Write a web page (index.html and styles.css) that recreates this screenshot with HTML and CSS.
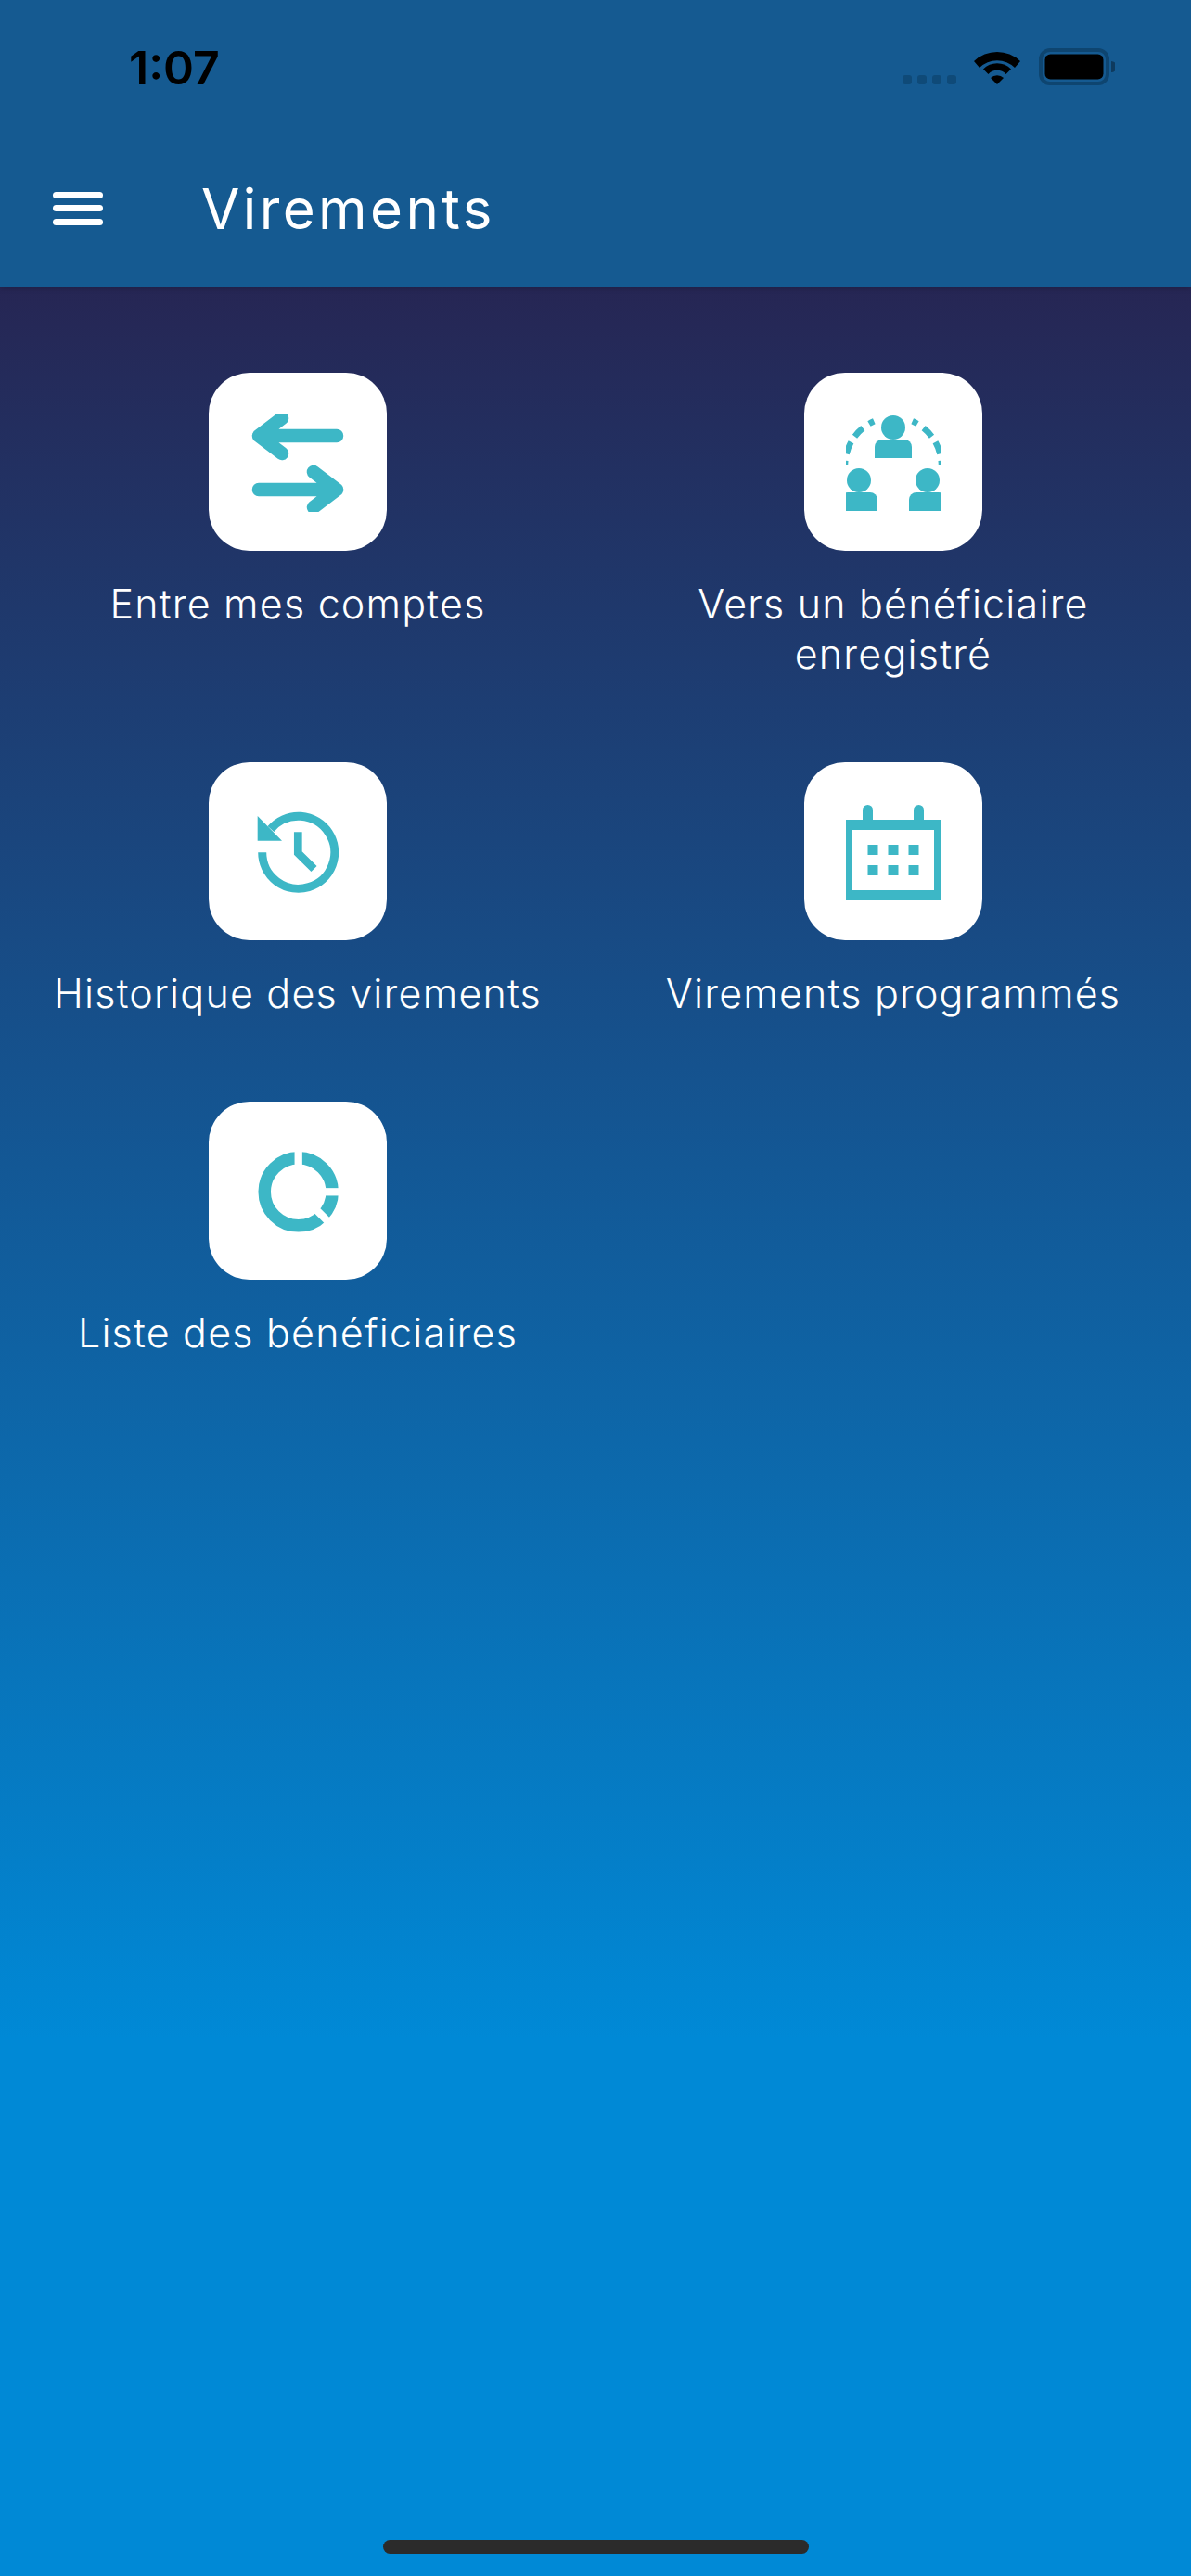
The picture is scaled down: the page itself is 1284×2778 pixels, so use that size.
FILE: index.html
```html
<!DOCTYPE html>
<html lang="fr">
<head>
    <meta charset="UTF-8">
    <meta name="viewport" content="width=device-width, initial-scale=1.0">
    <title>Virements</title>
    <link rel="stylesheet" href="styles.css">
</head>
<body>
    <div id="app">
        <header class="top">
            <div class="status">
                <span class="time">1:07</span>
                <div class="status-icons">
                    <div class="signal"><i></i><i></i><i></i><i></i></div>
                    <svg class="wifi" viewBox="0 0 50 38">
                        <path d="M0 13 A36 36 0 0 1 50 13 L44 20 A27 27 0 0 0 6 20 Z"/>
                        <path d="M10 24.5 A21 21 0 0 1 40 24.5 L34.500 30 A13 13 0 0 0 15.500 30 Z" transform="translate(0 -3)"/>
                        <path d="M18 31 A10 10 0 0 1 32 31 L25 38 Z"/>
                    </svg>
                    <svg class="battery" viewBox="0 0 82 40">
                        <rect x="2" y="2" width="72" height="36" rx="10" fill="none" stroke="#0e4570" stroke-width="4"/>
                        <rect x="6.500" y="6.500" width="63" height="27" rx="6"/>
                        <path d="M78 14 A6 6 0 0 1 78 26 Z" fill="#0e3a5e"/>
                    </svg>
                </div>
            </div>
            <div class="nav">
                <div class="burger"><span></span><span></span><span></span></div>
                <h1>Virements</h1>
            </div>
        </header>

        <main class="content">
            <div class="menu">
                <a class="item">
                    <div class="tile">
                        <svg viewBox="0 0 192 192">
                            <defs><clipPath id="arrows"><rect x="40" y="45" width="112" height="105"/></clipPath></defs>
                            <g class="line" clip-path="url(#arrows)" stroke-width="14.500">
                                <path d="M138 68 H54 M79 49 L54 68 L79 87"/>
                                <path d="M54 126 H138 M113 107 L138 126 L113 145"/>
                            </g>
                        </svg>
                    </div>
                    <p>Entre mes comptes</p>
                </a>
                <a class="item">
                    <div class="tile">
                        <svg viewBox="0 0 192 192">
                            <defs><clipPath id="group"><rect x="45" y="40" width="102" height="109"/></clipPath></defs>
                            <g clip-path="url(#group)">
                                <g class="line butt" stroke-width="6.500">
                                    <path d="M75.300 52.300 A52 52 0 0 0 70 55 M63.300 59.600 A52 52 0 0 0 54.500 68.700 M50.500 74.800 A52 52 0 0 0 45.600 87.400 M44.300 94.600 A52 52 0 0 0 44 100"/>
                                    <path d="M116.700 52.300 A52 52 0 0 1 122 55 M128.700 59.600 A52 52 0 0 1 137.500 68.700 M141.500 74.800 A52 52 0 0 1 146.400 87.400 M147.700 94.600 A52 52 0 0 1 148 100"/>
                                </g>
                                <circle class="fill" cx="96" cy="59" r="13"/>
                                <path class="fill" d="M76 92 V80 A8 8 0 0 1 84 72 H108 A8 8 0 0 1 116 80 V92 Z"/>
                                <circle class="fill" cx="59" cy="116" r="13"/>
                                <path class="fill" d="M39 149 V137 A8 8 0 0 1 47 129 H71 A8 8 0 0 1 79 137 V149 Z"/>
                                <circle class="fill" cx="133" cy="116" r="13"/>
                                <path class="fill" d="M113 149 V137 A8 8 0 0 1 121 129 H145 A8 8 0 0 1 153 137 V149 Z"/>
                            </g>
                        </svg>
                    </div>
                    <p>Vers un bénéficiaire<br>enregistré</p>
                </a>
                <a class="item">
                    <div class="tile">
                        <svg viewBox="0 0 192 192">
                            <path class="line butt" stroke-width="9" d="M57.700 97.300 A39 39 0 1 0 67 72"/>
                            <path class="fill" d="M52.700 58 V84.700 H79 Z"/>
                            <path class="line butt miter" stroke-width="8.700" d="M96.300 75.300 V98 L113.500 115"/>
                        </svg>
                    </div>
                    <p>Historique des virements</p>
                </a>
                <a class="item">
                    <div class="tile">
                        <svg viewBox="0 0 192 192">
                            <path class="fill" fill-rule="evenodd" d="M45 62 H63 V51.500 A5.500 5.500 0 0 1 74 51.500 V62 H118 V51.500 A5.500 5.500 0 0 1 129 51.500 V62 H147 V149 H45 Z M52 73 V138 H140 V73 Z"/>
                            <rect class="fill" x="68.500" y="89" width="11" height="11"/>
                            <rect class="fill" x="90.500" y="89" width="11" height="11"/>
                            <rect class="fill" x="112.500" y="89" width="11" height="11"/>
                            <rect class="fill" x="68.500" y="111" width="11" height="11"/>
                            <rect class="fill" x="90.500" y="111" width="11" height="11"/>
                            <rect class="fill" x="112.500" y="111" width="11" height="11"/>
                        </svg>
                    </div>
                    <p>Virements programmés</p>
                </a>
                <a class="item">
                    <div class="tile">
                        <svg viewBox="0 0 192 192">
                            <circle class="line" stroke-width="13.500" cx="96.700" cy="97.300" r="36.500"/>
                            <g class="line butt gap" stroke-width="8.300">
                                <path d="M96.700 48 V70"/>
                                <path d="M120 97.300 H146"/>
                                <path d="M114 114.600 L136 136.600"/>
                            </g>
                        </svg>
                    </div>
                    <p>Liste des bénéficiaires</p>
                </a>
            </div>
            <div class="home-bar"></div>
        </main>
    </div>
</body>
</html>
```

FILE: styles.css
```css
* {
    box-sizing: border-box;
}

body {
    margin: 0;
    font-family: Inter, "Open Sans", sans-serif;
    color: #ffffff;
}

#app {
    width: 1284px;
    height: 2778px;
    display: flex;
    flex-direction: column;
    overflow: hidden;
}

.top {
    height: 309px;
    background-color: #155a91;
    box-shadow: 0 2px 6px rgba(0, 0, 0, 0.2);
    position: relative;
}

.status {
    height: 140px;
    display: flex;
    justify-content: space-between;
    padding: 44px 82px 0 139px;
}

.time {
    font-size: 50px;
    font-weight: 600;
    line-height: 58px;
    color: #000000;
}

.status-icons {
    display: flex;
    align-items: flex-start;
    padding-top: 9px;
}

.signal {
    display: flex;
    gap: 6px;
    margin-top: 28px;
    margin-right: 19px;
}

.signal i {
    width: 10px;
    height: 10px;
    border-radius: 3px;
    background-color: #0f4a78;
}

.wifi {
    width: 50px;
    height: 38px;
    margin-right: 20px;
}

.battery {
    width: 82px;
    height: 40px;
    margin-top: -1px;
}

.nav {
    height: 169px;
    display: flex;
    align-items: center;
    padding-left: 57px;
}

.burger {
    display: flex;
    flex-direction: column;
    gap: 7.5px;
    margin-right: 106px;
}

.burger span {
    display: block;
    width: 54px;
    height: 7px;
    border-radius: 4px;
    background-color: #ffffff;
}

h1 {
    margin: 0;
    font-size: 60px;
    font-weight: 400;
    letter-spacing: 3.4px;
}

.content {
    flex: 1;
    display: flex;
    flex-direction: column;
    padding-top: 93px;
    background: linear-gradient(#262654 0, #0089d6 1890px);
}

.menu {
    display: grid;
    grid-template-columns: 1fr 1fr;
    row-gap: 90px;
}

.item {
    display: flex;
    flex-direction: column;
    align-items: center;
}

.item p {
    margin: 30px 0 0;
    font-size: 43px;
    font-weight: 300;
    letter-spacing: 1.2px;
    line-height: 54px;
    text-align: center;
}

.tile {
    width: 192px;
    height: 192px;
    border-radius: 44px;
    background-color: #ffffff;
}

.tile svg {
    display: block;
    width: 192px;
    height: 192px;
}

.fill {
    fill: #3db7c6;
}

.line {
    fill: none;
    stroke: #3db7c6;
    stroke-linecap: round;
    stroke-linejoin: round;
}

.butt {
    stroke-linecap: butt;
}

.miter {
    stroke-linejoin: miter;
}

.gap {
    stroke: #ffffff;
}

.home-bar {
    width: 459px;
    height: 15px;
    border-radius: 8px;
    background-color: #2b2b2b;
    margin: auto auto 24px;
}
```
